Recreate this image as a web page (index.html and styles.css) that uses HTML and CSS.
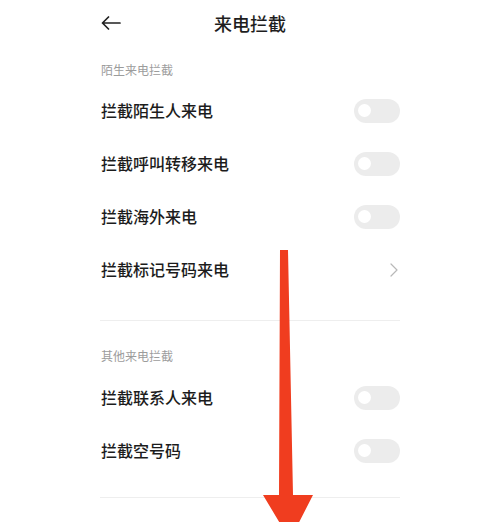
FILE: index.html
```html
<!DOCTYPE html>
<html lang="zh-CN">
<head>
<meta charset="utf-8">
<link rel="stylesheet" href="styles.css">
</head>
<body>
<div class="page">
  <header class="topbar">
    <svg class="back" width="20" height="14" viewBox="0 0 20 14"><path d="M19 7H1.5M7.5 1L1.5 7l6 6" fill="none" stroke="#222" stroke-width="1.7" stroke-linecap="round" stroke-linejoin="round"/></svg>
    <h1 class="title">来电拦截</h1>
    <span></span>
  </header>

  <section class="group">
    <div class="label first">陌生来电拦截</div>
    <div class="row"><span class="text">拦截陌生人来电</span><span class="toggle"><span class="knob"></span></span></div>
    <div class="row"><span class="text">拦截呼叫转移来电</span><span class="toggle"><span class="knob"></span></span></div>
    <div class="row"><span class="text">拦截海外来电</span><span class="toggle"><span class="knob"></span></span></div>
    <div class="row"><span class="text">拦截标记号码来电</span><svg class="chev" width="8" height="14" viewBox="0 0 8 14"><path d="M1 1l6 6-6 6" fill="none" stroke="#b8b8b8" stroke-width="1.2" stroke-linecap="round" stroke-linejoin="round"/></svg></div>
  </section>
  <div class="divider first"></div>

  <section class="group">
    <div class="label">其他来电拦截</div>
    <div class="row"><span class="text">拦截联系人来电</span><span class="toggle"><span class="knob"></span></span></div>
    <div class="row"><span class="text">拦截空号码</span><span class="toggle"><span class="knob"></span></span></div>
  </section>
  <div class="divider"></div>

  <svg class="overlay" width="500" height="522" viewBox="0 0 500 522"><polygon points="280,250 288,250 293,495 313,495 290,540 263,495 279,495" fill="#f03d1f"/></svg>
</div>
</body>
</html>
```

FILE: styles.css
```css
html, body {
  margin: 0;
  padding: 0;
  background: #ffffff;
}
body {
  font-family: "Noto Sans CJK SC", "Noto Sans", sans-serif;
  color: #1c1c1c;
  width: 500px;
  height: 522px;
  overflow: hidden;
}
.page {
  position: relative;
  padding: 0 100px;
  height: 522px;
}
.topbar {
  height: 46px;
  display: grid;
  grid-template-columns: 1fr auto 1fr;
  align-items: center;
}
.back {
  display: block;
  margin-left: 1px;
}
.title {
  margin: 0;
  font-size: 18px;
  line-height: 24px;
  font-weight: 500;
  color: #1e1e1e;
}
.label {
  font-size: 12px;
  line-height: 16px;
  color: #9c9c9c;
  padding: 27px 0 7px 1px;
}
.label.first {
  padding-top: 16px;
  padding-bottom: 6px;
}
.row {
  height: 53px;
  display: flex;
  align-items: center;
  justify-content: space-between;
}
.text {
  font-size: 16px;
  line-height: 20px;
  font-weight: 500;
  padding-left: 1px;
  padding-bottom: 2px;
}
.toggle {
  width: 46px;
  height: 24px;
  border-radius: 12px;
  background: #ececec;
  display: flex;
  align-items: center;
  padding-left: 4px;
  box-sizing: border-box;
}
.knob {
  width: 13px;
  height: 13px;
  border-radius: 50%;
  background: #ffffff;
}
.chev {
  display: block;
  margin-right: 2px;
}
.divider {
  height: 1px;
  background: #eeeeee;
  margin-top: 20px;
}
.divider.first {
  margin-top: 24px;
}
.overlay {
  position: absolute;
  left: 0;
  top: 0;
}
```
